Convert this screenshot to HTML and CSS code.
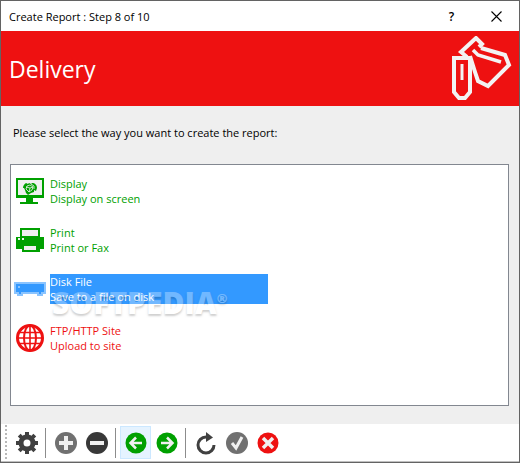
FILE: index.html
```html
<!DOCTYPE html>
<html lang="en">
<head>
    <meta charset="UTF-8">
    <meta name="viewport" content="width=device-width, initial-scale=1.0">
    <title>Create Report : Step 8 of 10</title>
    <link rel="stylesheet" href="styles.css">
</head>
<body>
    <div class="window">
        <div class="titlebar">
            <span class="title">Create Report : Step 8 of 10</span>
            <button class="title-btn" aria-label="Help">?</button>
            <button class="title-btn" aria-label="Close">
                <svg width="11" height="11" viewBox="0 0 11 11"><path d="M.5.5l10 10M10.5.5l-10 10" stroke="#000" stroke-width="1.1"/></svg>
            </button>
        </div>

        <header class="banner">
            <h1>Delivery</h1>
            <svg width="64" height="65" viewBox="0 0 64 65" fill="none" stroke="#f3f3f3" stroke-width="4">
                <path d="M4 22h16v34l-5 6H9l-5-6z"/>
                <path d="M12 28v16" stroke-width="3"/>
                <path d="M20 20l5 16 3 9 10 5 21-21-4-10-24-7"/>
                <path d="M17 21l-6-5L26 2l6 6-3 3"/>
                <path d="M23 14l5 5 23 7" stroke-width="3.500"/>
            </svg>
        </header>

        <main class="content">
            <p id="prompt">Please select the way you want to create the report:</p>
            <div class="list" role="radiogroup" aria-labelledby="prompt">
                <label class="item green">
                    <input type="radio" name="delivery" value="display">
                    <svg width="32" height="30" viewBox="0 0 32 30" fill="#00a000">
                        <path d="M2 2h28v20H19v4h5v2H6v-2h6v-4H2z"/>
                        <path fill="#f0f0f0" d="M4 4h24v15H4z"/>
                        <path d="M9 12c0-2 1-4 3-5l2 1 1-1 2 1 1-1c3 0 5 2 5 5l-1 3-2-1v2l-3 1-3 2-2-2-1-3-1-2z"/>
                        <path fill="none" stroke="#f0f0f0" stroke-width=".8" d="M12 13l1-3 3-1 3 2-1 3-3 2zM12 11l4 1 3-1M16 12l-1 4M17 8l3 2v3"/>
                    </svg>
                    <span class="text">Display<br>Display on screen</span>
                </label>
                <label class="item green">
                    <input type="radio" name="delivery" value="print">
                    <svg width="32" height="30" viewBox="0 0 32 30" fill="#00a000">
                        <path d="M6 3h20v9h4v12h-4v3H8v-3H2V12h4z"/>
                        <path fill="#f0f0f0" d="M8 5h16v6H8zM10 21h12v4H10zM4 13h2v2H4zM8 13h2v2H8z"/>
                    </svg>
                    <span class="text">Print<br>Print or Fax</span>
                </label>
                <label class="item">
                    <input type="radio" name="delivery" value="disk" checked>
                    <svg width="32" height="30" viewBox="0 0 32 30">
                        <path fill="#3399ff" stroke="#8ac4ff" stroke-width="2" d="M1 9h30v10h-3v2h-4v-2H8v2H4v-2H1z"/>
                        <path fill="#8ac4ff" d="M4 12h2v2H4z"/>
                    </svg>
                    <span class="text">Disk File<br>Save to a file on disk</span>
                </label>
                <label class="item red">
                    <input type="radio" name="delivery" value="ftp">
                    <svg width="32" height="30" viewBox="0 0 32 30" fill="none" stroke="#ee1111" stroke-width="2">
                        <circle cx="16" cy="15" r="12.5" stroke-width="3"/>
                        <ellipse cx="16" cy="15" rx="6" ry="12.5"/>
                        <path d="M16 2v26M3 15h26M5 9.500h22M5 20.500h22" stroke-width="1.6"/>
                    </svg>
                    <span class="text">FTP/HTTP Site<br>Upload to site</span>
                </label>
                <div class="watermark">SOFTPEDIA<sup>®</sup></div>
            </div>
        </main>

        <div class="toolbar" role="toolbar">
            <span class="grip"></span>
            <button aria-label="Options">
                <svg width="24" height="24" viewBox="0 0 24 24">
                    <circle cx="12" cy="12" r="6" fill="none" stroke="#404040" stroke-width="5"/>
                    <path stroke="#404040" stroke-width="4" d="M12 1v4M12 19v4M1 12h4M19 12h4M4.200 4.200l3 3M16.800 16.800l3 3M4.200 19.800l3-3M16.800 7.200l3-3"/>
                </svg>
            </button>
            <span class="separator"></span>
            <button aria-label="Add">
                <svg width="24" height="24" viewBox="0 0 24 24">
                    <circle cx="12" cy="12" r="11" fill="#707070"/>
                    <path stroke="#f0f0f0" stroke-width="4" d="M12 5v14M5 12h14"/>
                </svg>
            </button>
            <button aria-label="Remove">
                <svg width="24" height="24" viewBox="0 0 24 24">
                    <circle cx="12" cy="12" r="11" fill="#383838"/>
                    <path stroke="#f0f0f0" stroke-width="4" d="M5 12h14"/>
                </svg>
            </button>
            <span class="separator"></span>
            <button class="active" aria-label="Back">
                <svg width="24" height="24" viewBox="0 0 24 24">
                    <circle cx="12" cy="12" r="10.5" fill="#00a000"/>
                    <path fill="none" stroke="#f0f0f0" stroke-width="2.500" d="M18 12H7M12 6.500L6.500 12l5.500 5.500"/>
                </svg>
            </button>
            <button aria-label="Next">
                <svg width="24" height="24" viewBox="0 0 24 24">
                    <circle cx="12" cy="12" r="10.5" fill="#00a000"/>
                    <path fill="none" stroke="#f0f0f0" stroke-width="2.500" d="M6 12h11M12 6.500l5.500 5.500-5.500 5.500"/>
                </svg>
            </button>
            <span class="separator"></span>
            <button aria-label="Refresh">
                <svg width="24" height="24" viewBox="0 0 24 24">
                    <path fill="none" stroke="#404040" stroke-width="3" d="M14 6h-2a8 8 0 1 0 8 8"/>
                    <path fill="#404040" d="M12 1l7 5.500-7 4.500z"/>
                </svg>
            </button>
            <button aria-label="Finish">
                <svg width="24" height="24" viewBox="0 0 24 24">
                    <circle cx="12" cy="12" r="11" fill="#707070"/>
                    <path fill="none" stroke="#f0f0f0" stroke-width="3" d="M7 12l4 5 6-11"/>
                </svg>
            </button>
            <button aria-label="Cancel">
                <svg width="24" height="24" viewBox="0 0 24 24">
                    <circle cx="12" cy="12" r="10.500" fill="#ee1111"/>
                    <path stroke="#f0f0f0" stroke-width="3.500" d="M7 7l10 10M17 7L7 17"/>
                </svg>
            </button>
        </div>
    </div>
</body>
</html>
```
FILE: styles.css
```css
* {
    box-sizing: border-box;
}
body {
    margin: 0;
    font-family: "Open Sans", "Noto Sans", sans-serif;
    font-size: 11px;
    color: #000;
}
.window {
    display: flex;
    flex-direction: column;
    min-height: 100vh;
    border: 1px solid #636363;
    background: #efefef;
}
button {
    display: flex;
    align-items: center;
    justify-content: center;
    padding: 0;
    border: 1px solid transparent;
    background: none;
    font: inherit;
}
.titlebar {
    display: flex;
    align-items: center;
    height: 30px;
    padding-left: 8px;
    background: #fff;
}
.title {
    flex: 1;
}
.title-btn {
    width: 45px;
    height: 28px;
    font-size: 12px;
    font-weight: 600;
}
.banner {
    display: flex;
    align-items: center;
    justify-content: space-between;
    height: 75px;
    padding: 0 5px 0 8px;
    background: #ee1111;
    color: #fff;
}
.banner h1 {
    margin: 0;
    font-size: 23px;
    font-weight: normal;
}
.content {
    flex: 1;
    display: flex;
    flex-direction: column;
    padding: 18px 10px 18px 9px;
}
.content p {
    margin: 0 0 22px 3px;
    line-height: 18px;
}
.list {
    position: relative;
    flex: 1;
    display: flex;
    flex-direction: column;
    gap: 19px;
    padding: 11px 3px;
    border: 1px solid #828790;
    background: #fff;
}
.item {
    display: flex;
    align-items: center;
    gap: 4px;
    line-height: 15px;
}
.item input {
    position: absolute;
    opacity: 0;
}
.item svg {
    flex: none;
}
.text {
    width: 218px;
}
.green {
    color: #00a000;
}
.red {
    color: #ee1111;
}
.item input:checked ~ .text {
    background: #3399ff;
    color: #fff;
}
.watermark {
    position: absolute;
    left: 41px;
    top: 120px;
    font-size: 30px;
    font-weight: 800;
    line-height: 36px;
    color: #fff;
    text-shadow: 0 2px 2px rgba(0, 0, 0, 0.6);
    opacity: 0.3;
    pointer-events: none;
}
.watermark sup {
    font-size: 13px;
    line-height: 0;
}
.toolbar {
    display: flex;
    align-items: center;
    height: 38px;
    padding-left: 4px;
    border-bottom: 1px solid #c0c0c0;
    background: #fff;
}
.toolbar button {
    width: 31px;
    height: 33px;
}
.toolbar .active {
    border-color: #cce8ff;
    background: #e5f3ff;
}
.grip {
    width: 2px;
    height: 36px;
    margin-right: 4px;
    background: repeating-linear-gradient(#b8b8b8 0 2px, #fff 2px 4px);
}
.separator {
    width: 1px;
    height: 30px;
    margin: 0 4px 0 3px;
    background: #8c8c8c;
}
```
